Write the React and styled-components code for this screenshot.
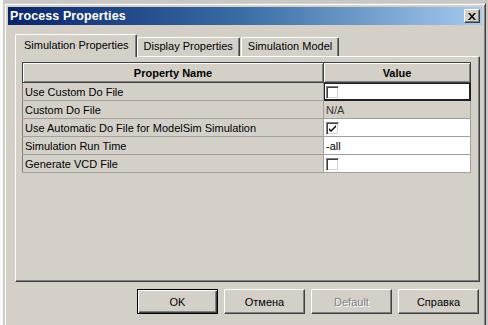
import React from 'react';
import styled, {createGlobalStyle} from 'styled-components';

const rows = [
    {name: 'Use Custom Do File', kind: 'check', checked: false, focused: true},
    {name: 'Custom Do File', kind: 'text', value: 'N/A', disabled: true},
    {name: 'Use Automatic Do File for ModelSim Simulation', kind: 'check', checked: true},
    {name: 'Simulation Run Time', kind: 'text', value: '-all'},
    {name: 'Generate VCD File', kind: 'check', checked: false},
];

const tabs = ['Simulation Properties', 'Display Properties', 'Simulation Model'];

export default function App() {
    return (
        <Screen>
            <GlobalStyle />
            <Dialog>
                <TitleBar>
                    <Title>Process Properties</Title>
                    <CloseButton>
                        <svg width="8" height="7" viewBox="0 0 8 7">
                            <path d="M0 0h2l2 2.5L6 0h2L5 3.5 8 7H6L4 4.5 2 7H0l3-3.5z" fill="#000" />
                        </svg>
                    </CloseButton>
                </TitleBar>
                <Content>
                    <TabRow>
                        {tabs.map((t, i) => (
                            <Tab key={t} active={i === 0}>{t}</Tab>
                        ))}
                    </TabRow>
                    <Panel>
                        <Grid>
                            <thead>
                                <tr>
                                    <HeadCell style={{width: 301}}>Property Name</HeadCell>
                                    <HeadCell>Value</HeadCell>
                                </tr>
                            </thead>
                            <tbody>
                                {rows.map((r) => (
                                    <tr key={r.name}>
                                        <NameCell>{r.name}</NameCell>
                                        <ValueCell disabled={r.disabled} focused={r.focused}>
                                            {r.kind === 'check' ? (
                                                <Check>
                                                    {r.checked && (
                                                        <svg width="9" height="9" viewBox="0 0 9 9">
                                                            <path d="M1 4l2 2 5-5v2L3 8 1 6z" fill="#000" />
                                                        </svg>
                                                    )}
                                                </Check>
                                            ) : (
                                                r.value
                                            )}
                                        </ValueCell>
                                    </tr>
                                ))}
                            </tbody>
                        </Grid>
                    </Panel>
                    <Buttons>
                        <Button isDefault>OK</Button>
                        <Button>Отмена</Button>
                        <Button disabled>Default</Button>
                        <Button>Справка</Button>
                    </Buttons>
                </Content>
            </Dialog>
        </Screen>
    );
}

const GlobalStyle = createGlobalStyle`
    html, body {
        margin: 0;
        padding: 0;
        background: #f4f4f4;
        font-family: "Liberation Sans", Arial, sans-serif;
        overflow: hidden;
    }
`;

const Screen = styled.div`
    width: 488px;
    height: 325px;
    padding: 3px 0 0 4px;
    box-sizing: border-box;
    background: linear-gradient(90deg, #fafafa 0, #fafafa 3px, #c8c8c8 3px, #c8c8c8 4px);
`;

const Dialog = styled.div`
    width: 482px;
    height: 330px;
    box-sizing: border-box;
    background: #d4d0c8;
    border: 1px solid;
    border-color: #d4d0c8 #404040 #404040 #d4d0c8;
    box-shadow: inset 1px 1px 0 #fff, inset -1px -1px 0 #808080;
    padding: 3px;
`;

const TitleBar = styled.div`
    height: 18px;
    display: flex;
    align-items: center;
    justify-content: space-between;
    padding: 0 2px 0 2px;
    background: linear-gradient(90deg, #0a246a 0%, #3a6ea5 50%, #a6caf0 100%);
`;

const Title = styled.div`
    color: #fff;
    font-weight: bold;
    font-size: 12.5px;
    letter-spacing: 0.1px;
`;

const CloseButton = styled.div`
    width: 16px;
    height: 14px;
    box-sizing: border-box;
    display: flex;
    align-items: center;
    justify-content: center;
    background: #d4d0c8;
    border: 1px solid;
    border-color: #fff #404040 #404040 #fff;
    box-shadow: inset -1px -1px 0 #808080;
`;

const Content = styled.div`
    padding: 7px 2px 0 7px;
`;

const TabRow = styled.div`
    display: flex;
    align-items: flex-end;
    height: 24px;
    padding-left: 2px;
`;

const Tab = styled.div`
    height: ${(p) => (p.active ? '23px' : '19px')};
    box-sizing: border-box;
    padding: ${(p) => (p.active ? '4px 7px 0 8px' : '2px 6px 0 6px')};
    margin: ${(p) => (p.active ? '0 -1px -1px -2px' : '0 0 0 1px')};
    font-size: 11px;
    color: #000;
    background: #d4d0c8;
    border: 1px solid;
    border-color: #fff #404040 transparent #fff;
    border-bottom: none;
    box-shadow: inset -1px 0 0 #808080;
    border-radius: 2px 2px 0 0;
    position: relative;
    z-index: ${(p) => (p.active ? 2 : 1)};
    white-space: nowrap;
`;

const Panel = styled.div`
    height: 226px;
    box-sizing: border-box;
    border: 1px solid;
    border-color: #fff #404040 #404040 #fff;
    box-shadow: inset -1px -1px 0 #808080;
    padding: 5px 0 0 6px;
`;

const Grid = styled.table`
    border-collapse: collapse;
    width: 449px;
    font-size: 11px;
    table-layout: fixed;
`;

const HeadCell = styled.th`
    height: 20px;
    box-sizing: border-box;
    padding: 0;
    font-weight: bold;
    text-align: center;
    background: #d4d0c8;
    border: 1px solid #404040;
    box-shadow: inset 1px 1px 0 #fff, inset -1px -1px 0 #808080;
`;

const NameCell = styled.td`
    height: 18px;
    box-sizing: border-box;
    padding: 0 0 0 2px;
    background: #d4d0c8;
    border: 1px solid #a0a0a0;
    border-left-color: #808080;
    white-space: nowrap;
    overflow: hidden;
`;

const ValueCell = styled.td`
    height: 18px;
    box-sizing: border-box;
    padding: 0 0 0 2px;
    background: ${(p) => (p.disabled ? '#d4d0c8' : '#fff')};
    color: ${(p) => (p.disabled ? '#333' : '#000')};
    border: 1px solid #a0a0a0;
    box-shadow: ${(p) => (p.focused ? 'inset 0 0 0 1px #202020' : 'none')};
    ${(p) => p.focused && 'border-color: #202020;'}
`;

const Check = styled.div`
    width: 13px;
    height: 13px;
    box-sizing: border-box;
    margin-top: 1px;
    display: flex;
    align-items: center;
    justify-content: center;
    background: #fff;
    border: 1px solid;
    border-color: #808080 #fff #fff #808080;
    box-shadow: inset 1px 1px 0 #404040, inset -1px -1px 0 #d4d0c8;
`;

const Buttons = styled.div`
    display: flex;
    justify-content: flex-end;
    gap: 6px;
    padding-top: 7px;
    padding-right: 1px;
`;

const Button = styled.div`
    width: 81px;
    height: 25px;
    box-sizing: border-box;
    display: flex;
    align-items: center;
    justify-content: center;
    font-size: 11px;
    background: #d4d0c8;
    color: ${(p) => (p.disabled ? '#808080' : '#000')};
    text-shadow: ${(p) => (p.disabled ? '1px 1px 0 #fff' : 'none')};
    border: 1px solid;
    border-color: ${(p) => (p.isDefault ? '#000' : '#fff #404040 #404040 #fff')};
    box-shadow: ${(p) =>
        p.isDefault
            ? 'inset 1px 1px 0 #fff, inset -1px -1px 0 #404040, inset -2px -2px 0 #808080'
            : 'inset -1px -1px 0 #808080'};
`;
